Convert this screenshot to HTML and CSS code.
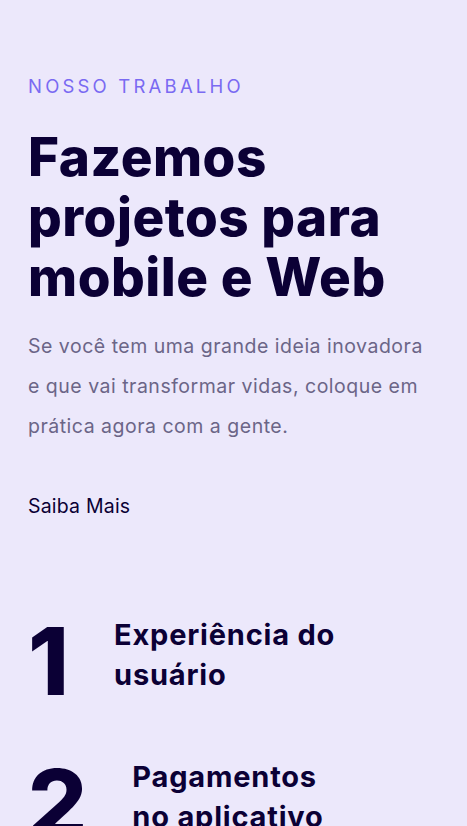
FILE: index.html
```html
<!DOCTYPE html>
<html lang="pt-BR">
<head>
<meta charset="utf-8">
<title>Nosso trabalho</title>
<link rel="stylesheet" href="styles.css">
</head>
<body>
<section class="work">
  <p class="eyebrow">NOSSO TRABALHO</p>
  <h1 class="title">Fazemos projetos para mobile e Web</h1>
  <p class="lead">Se você tem uma grande ideia inovadora e que vai transformar vidas, coloque em prática agora com a gente.</p>
  <a class="more" href="#">Saiba Mais</a>
  <ol class="steps">
    <li class="step"><span class="num">1</span><h2 class="step-title">Experiência do usuário</h2></li>
    <li class="step"><span class="num">2</span><h2 class="step-title">Pagamentos no aplicativo</h2></li>
  </ol>
</section>
</body>
</html>
```
FILE: styles.css
```css
html, body {
  margin: 0;
  padding: 0;
  background: #ece8fb;
}
body {
  font-family: Inter, "Noto Sans", sans-serif;
  color: #0b0035;
}
.work {
  padding: 74px 28px 0;
}
.eyebrow {
  margin: 0;
  font-size: 18.5px;
  line-height: 24px;
  letter-spacing: 3.2px;
  font-weight: 400;
  color: #7a6af2;
}
.title {
  margin: 29px 0 0;
  font-size: 53px;
  line-height: 60px;
  font-weight: 800;
  letter-spacing: 0.5px;
  color: #0b0035;
  max-width: 400px;
}
.lead {
  margin: 19px 0 0;
  font-size: 19.5px;
  line-height: 40px;
  letter-spacing: 0.5px;
  color: #6b6587;
  max-width: 405px;
}
.more {
  display: inline-block;
  margin-top: 48px;
  font-size: 19.5px;
  line-height: 24px;
  letter-spacing: 0.2px;
  color: #0b0035;
  text-decoration: none;
}
.steps {
  list-style: none;
  margin: 97px 0 0;
  padding: 0;
  display: flex;
  flex-direction: column;
  gap: 50px;
}
.step {
  display: flex;
  align-items: flex-start;
  gap: 45px;
}
.num {
  font-size: 93px;
  line-height: 92px;
  font-weight: 800;
  color: #0b0035;
}
.step-title {
  margin: 0;
  font-size: 29px;
  line-height: 40px;
  font-weight: 700;
  letter-spacing: 0.8px;
  max-width: 200px;
  color: #0b0035;
}
.step:first-child .step-title {
  max-width: 240px;
}
```
